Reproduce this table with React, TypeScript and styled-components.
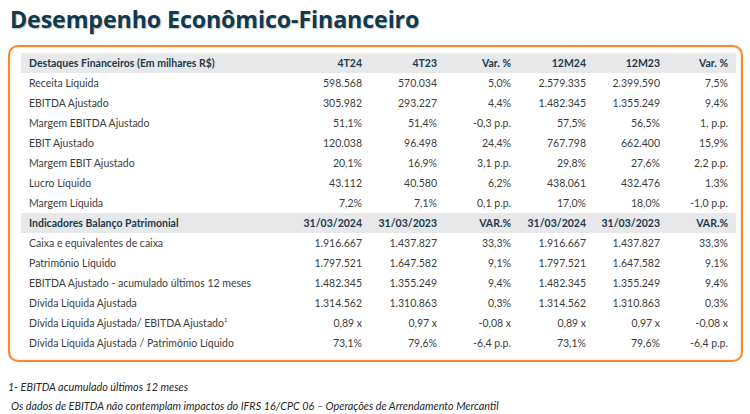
import React from "react";
import styled, { createGlobalStyle } from "styled-components";

const Global = createGlobalStyle`
  html, body { margin: 0; padding: 0; background: #ffffff; }
  body { width: 750px; height: 414px; overflow: hidden; }
`;

const Page = styled.div`
  padding: 4px 0 0 8px;
  font-family: Lato, "Liberation Sans", sans-serif;
`;

const Title = styled.h1`
  margin: 0 0 0 2px;
  font-family: "Open Sans", sans-serif;
  font-weight: 700;
  font-size: 23.2px;
  line-height: 30px;
  color: #0f3a4f;
  text-shadow: 1px 1px 1px rgba(0, 0, 0, 0.25);
  letter-spacing: -0.1px;
`;

const Card = styled.div`
  margin-top: 11px;
  width: 735px;
  box-sizing: border-box;
  border: 2px solid #f58a32;
  border-radius: 10px;
  box-shadow: inset 0 0 2px rgba(245, 138, 50, 0.5), 0 0 1px rgba(245, 138, 50, 0.4);
  padding: 6px 0 7px 11px;
`;

const Grid = styled.div`
  display: grid;
  grid-template-columns: 274px 75px 75px 74px 75px 74px 68px;
  width: 715px;
`;

const Cell = styled.div<{ $head?: boolean; $num?: boolean }>`
  height: 20px;
  line-height: 20px;
  font-size: 10.5px;
  white-space: nowrap;
  text-align: ${(p) => (p.$num ? "right" : "left")};
  padding: ${(p) => (p.$num ? "0 8px 0 0" : "0 0 0 8px")};
  background: ${(p) => (p.$head ? "#e7e8ea" : "transparent")};
  color: ${(p) => (p.$head ? "#1c3a4d" : "#3d3d3d")};
  font-weight: ${(p) => (p.$head ? 700 : 400)};
`;

const Sup = styled.sup`
  font-size: 6px;
  line-height: 0;
  vertical-align: 5px;
`;

const Notes = styled.div`
  margin-top: 15px;
  font-family: Lato, "Liberation Sans", sans-serif;
  font-style: italic;
  font-size: 10.8px;
  color: #262626;
`;

const Note = styled.div<{ $indent?: boolean }>`
  height: 19px;
  line-height: 19px;
  padding-left: ${(p) => (p.$indent ? "3px" : "0")};
`;

type Row = { head?: boolean; cells: React.ReactNode[] };

const rows: Row[] = [
  { head: true, cells: ["Destaques Financeiros (Em milhares R$)", "4T24", "4T23", "Var. %", "12M24", "12M23", "Var. %"] },
  { cells: ["Receita Líquida", "598.568", "570.034", "5,0%", "2.579.335", "2.399.590", "7,5%"] },
  { cells: ["EBITDA Ajustado", "305.982", "293.227", "4,4%", "1.482.345", "1.355.249", "9,4%"] },
  { cells: ["Margem EBITDA Ajustado", "51,1%", "51,4%", "-0,3 p.p.", "57,5%", "56,5%", "1, p.p."] },
  { cells: ["EBIT Ajustado", "120.038", "96.498", "24,4%", "767.798", "662.400", "15,9%"] },
  { cells: ["Margem EBIT Ajustado", "20,1%", "16,9%", "3,1 p.p.", "29,8%", "27,6%", "2,2 p.p."] },
  { cells: ["Lucro Líquido", "43.112", "40.580", "6,2%", "438.061", "432.476", "1,3%"] },
  { cells: ["Margem Líquida", "7,2%", "7,1%", "0,1 p.p.", "17,0%", "18,0%", "-1,0 p.p."] },
  { head: true, cells: ["Indicadores Balanço Patrimonial", "31/03/2024", "31/03/2023", "VAR.%", "31/03/2024", "31/03/2023", "VAR.%"] },
  { cells: ["Caixa e equivalentes de caixa", "1.916.667", "1.437.827", "33,3%", "1.916.667", "1.437.827", "33,3%"] },
  { cells: ["Patrimônio Líquido", "1.797.521", "1.647.582", "9,1%", "1.797.521", "1.647.582", "9,1%"] },
  { cells: ["EBITDA Ajustado - acumulado últimos 12 meses", "1.482.345", "1.355.249", "9,4%", "1.482.345", "1.355.249", "9,4%"] },
  { cells: ["Dívida Líquida Ajustada", "1.314.562", "1.310.863", "0,3%", "1.314.562", "1.310.863", "0,3%"] },
  { cells: [<>Dívida Líquida Ajustada/ EBITDA Ajustado<Sup>1</Sup></>, "0,89 x", "0,97 x", "-0,08 x", "0,89 x", "0,97 x", "-0,08 x"] },
  { cells: ["Dívida Líquida Ajustada / Patrimônio Líquido", "73,1%", "79,6%", "-6,4 p.p.", "73,1%", "79,6%", "-6,4 p.p."] },
];

export default function App() {
  return (
    <>
      <Global />
      <Page>
        <Title>Desempenho Econômico-Financeiro</Title>
        <Card>
          <Grid>
            {rows.map((r, i) =>
              r.cells.map((c, j) => (
                <Cell key={`${i}-${j}`} $head={r.head} $num={j > 0}>
                  {c}
                </Cell>
              ))
            )}
          </Grid>
        </Card>
        <Notes>
          <Note>1- EBITDA acumulado últimos 12 meses</Note>
          <Note $indent>Os dados de EBITDA não contemplam impactos do IFRS 16/CPC 06 – Operações de Arrendamento Mercantil</Note>
        </Notes>
      </Page>
    </>
  );
}
